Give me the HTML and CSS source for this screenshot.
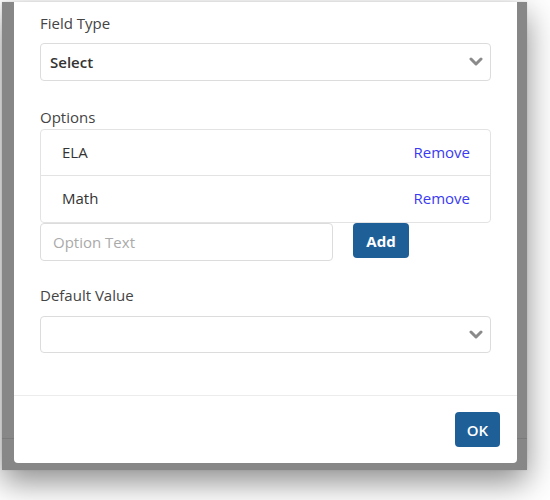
FILE: index.html
```html
<!DOCTYPE html>
<html lang="en">
<head>
  <meta charset="UTF-8" />
  <title>Field Settings</title>
  <link rel="stylesheet" href="styles.css">
</head>
<body>

  <div class="janela">
    <div class="modal">

      <div class="modal-body">
        <div class="grupo">
          <label class="rotulo">Field Type</label>
          <div class="seletor">
            <span class="seletor-valor">Select</span>
            <svg class="seta" width="14" height="10" viewBox="0 0 14 10">
              <path d="M2 2 L7 7 L12 2" fill="none" stroke="#8a8a8a" stroke-width="3" stroke-linecap="round" stroke-linejoin="round"/>
            </svg>
          </div>
        </div>

        <div class="grupo grupo-opcoes">
          <label class="rotulo rotulo-colado">Options</label>
          <ul class="lista">
            <li class="item"><span>ELA</span><a href="#" class="remover">Remove</a></li>
            <li class="item"><span>Math</span><a href="#" class="remover">Remove</a></li>
          </ul>
          <div class="linha-add">
            <input class="campo" type="text" placeholder="Option Text" />
            <button class="botao botao-add">Add</button>
          </div>
        </div>

        <div class="grupo grupo-padrao">
          <label class="rotulo">Default Value</label>
          <div class="seletor seletor-baixo">
            <span class="seletor-valor"></span>
            <svg class="seta" width="14" height="10" viewBox="0 0 14 10">
              <path d="M2 2 L7 7 L12 2" fill="none" stroke="#8a8a8a" stroke-width="3" stroke-linecap="round" stroke-linejoin="round"/>
            </svg>
          </div>
        </div>
      </div>

      <!-- rodape com o botao OK -->
      <div class="modal-footer">
        <button class="botao botao-ok">OK</button>
      </div>

    </div>
  </div>

</body>
</html>
```

FILE: styles.css
```css
html, body {
  margin: 0; padding: 0;
  height: 100%;
  overflow: hidden;
  background: #fff;
  font-family: 'Open Sans', 'Noto Sans', sans-serif;
}

/* janela com o fundo escuro atras do modal */
.janela {
  margin: 2px 0 0 2px;
  width: 525px;
  height: 468px;
  box-sizing: border-box;
  padding: 0 10px 7px 12px;
  display: flex;
  background: #878787 linear-gradient(to bottom, transparent 436px, #7b7b7b 436px, #7b7b7b 437px, transparent 437px);
  box-shadow: 0 12px 30px rgba(0, 0, 0, 0.45), 0 0 2px rgba(0, 0, 0, 0.1);
}

.modal {
  flex: 1;
  background: #fff;
  border-radius: 0 0 4px 4px;
  display: flex;
  flex-direction: column;
}

.modal-body {
  flex: 1;
  padding: 12px 26px 0 26px;
}

.grupo {
  display: flex;
  flex-direction: column;
}

.rotulo {
  font-size: 15px;
  line-height: 19px;
  color: #444;
  margin-bottom: 10px;
}

.rotulo-colado {
  margin-bottom: 2px;
}

.grupo-opcoes {
  margin-top: 27px;
}

.grupo-padrao {
  margin-top: 25px;
}

.grupo-padrao .rotulo {
  margin-bottom: 11px;
}

.seletor {
  height: 38px;
  box-sizing: border-box;
  border: 1px solid #dcdcdc;
  border-radius: 4px;
  display: flex;
  align-items: center;
  justify-content: space-between;
  padding: 0 7px 0 9px;
}

.seletor-baixo {
  height: 37px;
}

.seletor-valor {
  font-size: 15px;
  font-weight: 600;
  color: #333;
}

.seta {
  display: block;
}

.lista {
  list-style: none;
  margin: 0;
  padding: 0 0 1px 0;
  border: 1px solid #e3e3e3;
  border-radius: 4px;
}

.item {
  height: 43px;
  padding: 0 20px 2px 21px;
  display: flex;
  align-items: center;
  justify-content: space-between;
  font-size: 15px;
  color: #333;
}

.item + .item {
  border-top: 1px solid #e3e3e3;
}

.remover {
  color: #3a3af2;
  text-decoration: none;
  font-size: 15px;
}

.linha-add {
  display: flex;
  align-items: flex-start;
  gap: 20px;
}

.campo {
  width: 293px;
  height: 38px;
  box-sizing: border-box;
  border: 1px solid #dcdcdc;
  border-radius: 4px;
  padding: 0 12px;
  font-family: inherit;
  font-size: 15px;
  color: #333;
}

.campo::placeholder {
  color: #aaa;
}

.botao {
  border: none;
  border-radius: 4px;
  background: #1f5f98;
  color: #fff;
  font-family: inherit;
  cursor: pointer;
}

.botao-add {
  width: 56px;
  height: 35px;
  font-size: 15px;
  font-weight: 700;
}

.modal-footer {
  border-top: 1px solid #ececec;
  padding: 16px 17px 16px 0;
  display: flex;
  justify-content: flex-end;
}

.botao-ok {
  width: 45px;
  height: 35px;
  font-size: 15px;
  font-weight: 600;
}
```
